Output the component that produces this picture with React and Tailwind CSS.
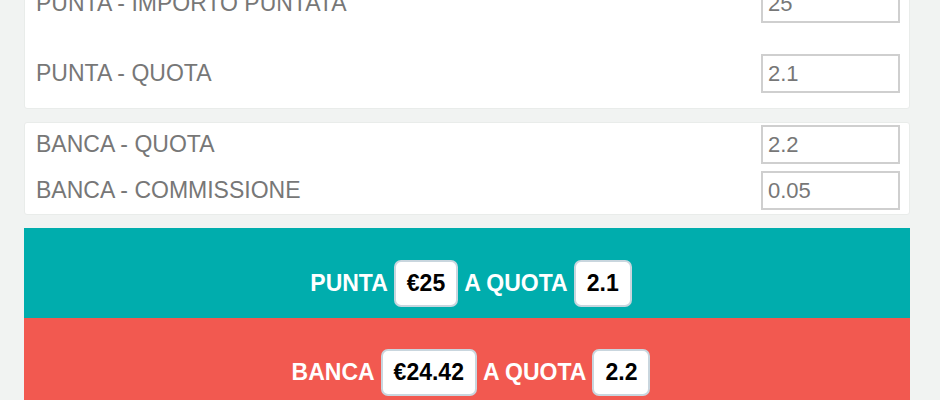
// App.jsx
const font = { fontFamily: '"Liberation Sans", Arial, sans-serif' };

const Field = ({ label, value, className = '' }) => (
  <div className={`flex items-center justify-between ${className}`}>
    <span className="text-[23px] leading-none text-[#777]">{label}</span>
    <input
      readOnly
      value={value}
      className="w-[139px] h-[39px] border-2 border-[#cfcfcf] bg-white px-[5px] text-[22px] text-[#777] outline-none"
    />
  </div>
);

const Badge = ({ children }) => (
  <span className="inline-flex items-center h-[47px] px-[11px] mx-[2px] rounded-[7px] border-2 border-[#c9d6de] bg-white text-black">
    {children}
  </span>
);

export default function App() {
  return (
    <div className="h-[400px] bg-[#f1f3f2] overflow-hidden" style={font}>
      <div className="ml-[24px] w-[886px] -mt-[26px]">
        {/* punta */}
        <div className="bg-white rounded-[3px] border border-[#e9ecea] pl-[11px] pr-[9px] pt-[9px] pb-[15px]">
          <Field label="PUNTA - IMPORTO PUNTATA" value="25" />
          <Field label="PUNTA - QUOTA" value="2.1" className="mt-[31px]" />
        </div>

        {/* banca */}
        <div className="mt-[13px] bg-white rounded-[3px] border border-[#e9ecea] pl-[11px] pr-[9px] pt-[2px] pb-[4px]">
          <Field label="BANCA - QUOTA" value="2.2" />
          <Field label="BANCA - COMMISSIONE" value="0.05" className="mt-[7px]" />
        </div>

        {/* risultato */}
        <div className="mt-[13px] text-white font-bold text-[23px]">
          <div className="bg-[#00adad] h-[90px] pt-[32px] flex justify-center pl-[10px]">
            <div className="flex items-center gap-[4px] h-[47px]">
              <span>PUNTA</span>
              <Badge>€25</Badge>
              <span>A QUOTA</span>
              <Badge>2.1</Badge>
            </div>
          </div>
          <div className="bg-[#f25950] h-[120px] pt-[31px] flex justify-center pl-[10px]">
            <div className="flex items-center gap-[4px] h-[47px]">
              <span>BANCA</span>
              <Badge>€24.42</Badge>
              <span>A QUOTA</span>
              <Badge>2.2</Badge>
            </div>
          </div>
        </div>
      </div>
    </div>
  );
}
